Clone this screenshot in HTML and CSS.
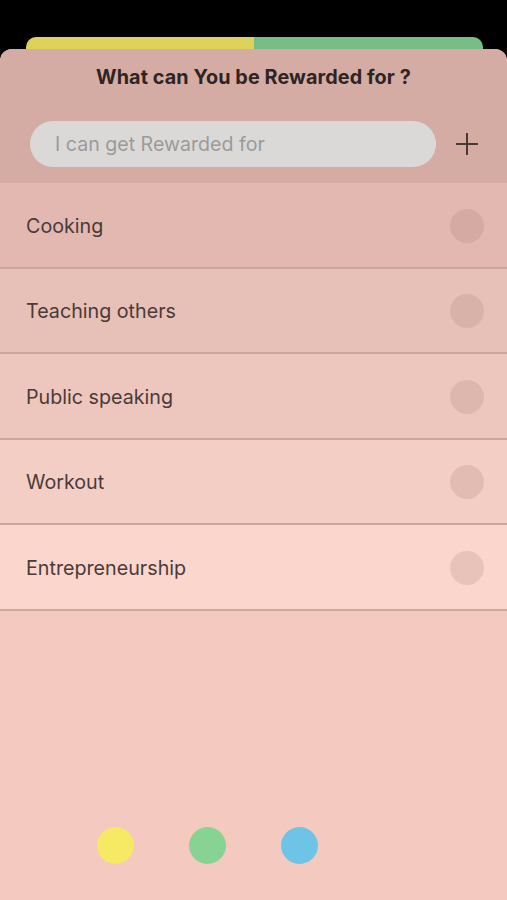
FILE: index.html
```html
<!DOCTYPE html>
<html>
<head>
<meta charset="utf-8">
<link rel="stylesheet" href="styles.css">
</head>
<body>
<div class="screen">
  <div class="back-tab">
    <div class="tab-yellow"></div>
    <div class="tab-green"></div>
  </div>
  <div class="sheet">
    <div class="header">
      <h1 class="title">What can You be Rewarded for ?</h1>
      <div class="input-row">
        <div class="input">I can get Rewarded for</div>
        <svg class="plus" width="24" height="24" viewBox="0 0 24 24"><path d="M12 1v22M1 12h22" stroke="#4a3a36" stroke-width="2" fill="none"/></svg>
      </div>
    </div>
    <ul class="list">
      <li class="row r1"><span>Cooking</span><i class="check"></i></li>
      <li class="row r2"><span>Teaching others</span><i class="check"></i></li>
      <li class="row r3"><span>Public speaking</span><i class="check"></i></li>
      <li class="row r4"><span>Workout</span><i class="check"></i></li>
      <li class="row r5"><span>Entrepreneurship</span><i class="check"></i></li>
    </ul>
    <div class="spacer"></div>
    <div class="dots">
      <i class="dot yellow"></i>
      <i class="dot green"></i>
      <i class="dot blue"></i>
    </div>
  </div>
</div>
</body>
</html>
```

FILE: styles.css
```css
* { box-sizing: border-box; }
html, body { margin: 0; padding: 0; background: #000; }
body { font-family: "Inter", "Liberation Sans", sans-serif; }
.screen {
  width: 507px;
  height: 900px;
  display: flex;
  flex-direction: column;
  padding-top: 37px;
  overflow: hidden;
}
.back-tab {
  display: flex;
  margin: 0 24px 0 26px;
  height: 12px;
  border-radius: 10px 10px 0 0;
  overflow: hidden;
  flex: none;
}
.tab-yellow { flex: 228; background: #dfd25a; }
.tab-green { flex: 229; background: #77bd86; }
.sheet {
  flex: 1;
  display: flex;
  flex-direction: column;
  background: #f4c9bf;
  border-radius: 12px 12px 0 0;
  overflow: hidden;
}
.header {
  background: #d4aca4;
  height: 134px;
  padding-top: 16px;
}
.title {
  margin: 0;
  text-align: center;
  font-size: 19.8px;
  font-weight: 700;
  color: #2e2523;
  line-height: 24px;
  letter-spacing: 0.1px;
}
.input-row {
  display: flex;
  align-items: center;
  margin-top: 32px;
  padding-left: 30px;
}
.input {
  width: 406px;
  height: 46px;
  border-radius: 23px;
  background: #dbd9d8;
  color: #9c9a99;
  font-size: 19.6px;
  line-height: 46px;
  padding-left: 25px;
}
.plus { margin-left: 19px; }
.list { list-style: none; margin: 0; padding: 0; }
.row {
  height: 85.5px;
  display: flex;
  align-items: center;
  justify-content: space-between;
  padding: 2px 23px 0 26px;
  border-bottom: 2px solid #cca69f;
  font-size: 19.7px;
  color: #4a3b37;
}
.r1 { background: #e2b8b0; }
.r2 { background: #e7c0b7; }
.r3 { background: #edc7be; }
.r4 { background: #f3cec5; }
.r5 { background: #fbd6cd; }
.check {
  width: 34px;
  height: 34px;
  border-radius: 50%;
  background: rgba(150, 110, 100, 0.18);
}
.spacer { flex: 1; }
.dots {
  display: flex;
  gap: 55px;
  padding-left: 97px;
  padding-bottom: 36px;
}
.dot { width: 37px; height: 37px; border-radius: 50%; display: block; }
.yellow { background: #f6e964; }
.green { background: #86d394; }
.blue { background: #6dc4e7; }
```
